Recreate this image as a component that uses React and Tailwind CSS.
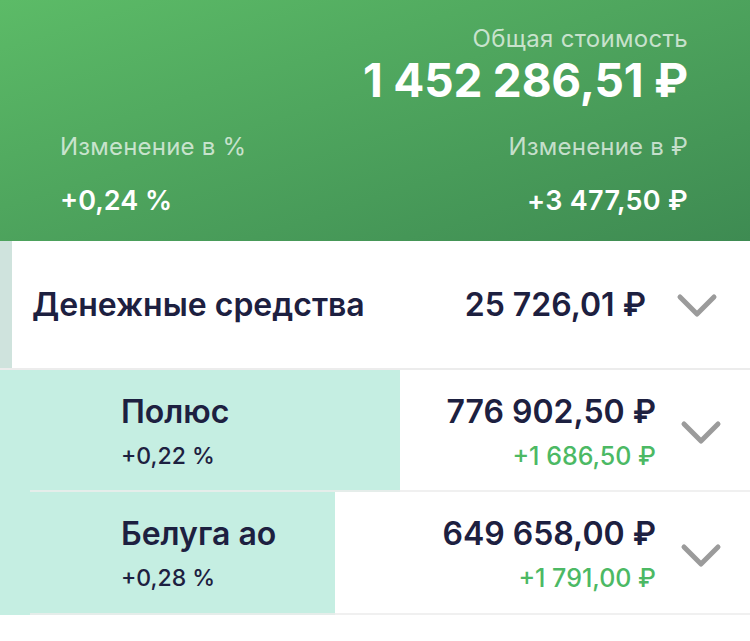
import React from "react";

const Chevron = () => (
  <svg width="42" height="26" viewBox="0 0 42 26" fill="none">
    <polyline points="4,4 21,21 38,4" stroke="#9b9b9b" strokeWidth="5" strokeLinecap="round" strokeLinejoin="round" />
  </svg>
);

const rows = [
  { name: "Полюс", pct: "+0,22 %", value: "776 902,50 ₽", change: "+1 686,50 ₽", bar: 400, h: "h-[122px]" },
  { name: "Белуга ао", pct: "+0,28 %", value: "649 658,00 ₽", change: "+1 791,00 ₽", bar: 335, h: "h-[123px]" },
];

export default function App() {
  return (
    <div className="w-[750px] h-[641px] bg-white overflow-hidden" style={{ fontFamily: "Inter, 'Noto Sans', sans-serif" }}>
      <div className="h-[241px] bg-gradient-to-br from-[#5cbb67] to-[#3e8b52] pl-[60px] pr-[62px] pt-[25px] text-white">
        <div className="text-right text-[24px] leading-[28px] tracking-[0.3px] text-white/70">Общая стоимость</div>
        <div className="mt-[2px] text-right text-[46px] leading-[50px] font-bold tracking-[-0.2px]">1 452 286,51 ₽</div>
        <div className="mt-[28px] flex justify-between text-[24px] leading-[28px] tracking-[0.2px] text-white/70">
          <span>Изменение в %</span>
          <span>Изменение в ₽</span>
        </div>
        <div className="mt-[24px] flex justify-between text-[27px] leading-[32px] font-semibold">
          <span>+0,24 %</span>
          <span className="tracking-[0.3px]">+3 477,50 ₽</span>
        </div>
      </div>

      <div className="flex h-[129px] border-b-2 border-[#ececec]">
        <div className="w-[12px] bg-[#cfe3dd]" />
        <div className="flex flex-1 items-center pl-[20px] pr-[32px] text-[#1d2040]">
          <span className="text-[32px] font-semibold">Денежные средства</span>
          <span className="ml-auto text-[32px] font-semibold">25 726,01 ₽</span>
          <div className="ml-[30px] mt-[2px]">
            <Chevron />
          </div>
        </div>
      </div>

      {rows.map((r) => (
        <div key={r.name} className={`relative ${r.h}`}>
          <div className="absolute inset-y-0 left-0 bg-[#c5eee2]" style={{ width: r.bar }} />
          <div className="absolute bottom-0 left-[30px] right-0 h-[2px] bg-[#ececec]/80" />
          <div className="relative flex h-full items-center pl-[121px] pr-[28px] text-[#1d2040]">
            <div className="flex flex-col">
              <span className="text-[32px] leading-[38px] font-semibold">{r.name}</span>
              <span className="mt-[11px] text-[23px] leading-[28px] font-medium">{r.pct}</span>
            </div>
            <div className="ml-auto flex flex-col items-end">
              <span className="text-[32px] leading-[38px] font-semibold">{r.value}</span>
              <span className="mt-[11px] text-[25px] leading-[28px] font-medium text-[#4cb964]">{r.change}</span>
            </div>
            <div className="ml-[24px] mt-[4px]">
              <Chevron />
            </div>
          </div>
        </div>
      ))}
    </div>
  );
}
